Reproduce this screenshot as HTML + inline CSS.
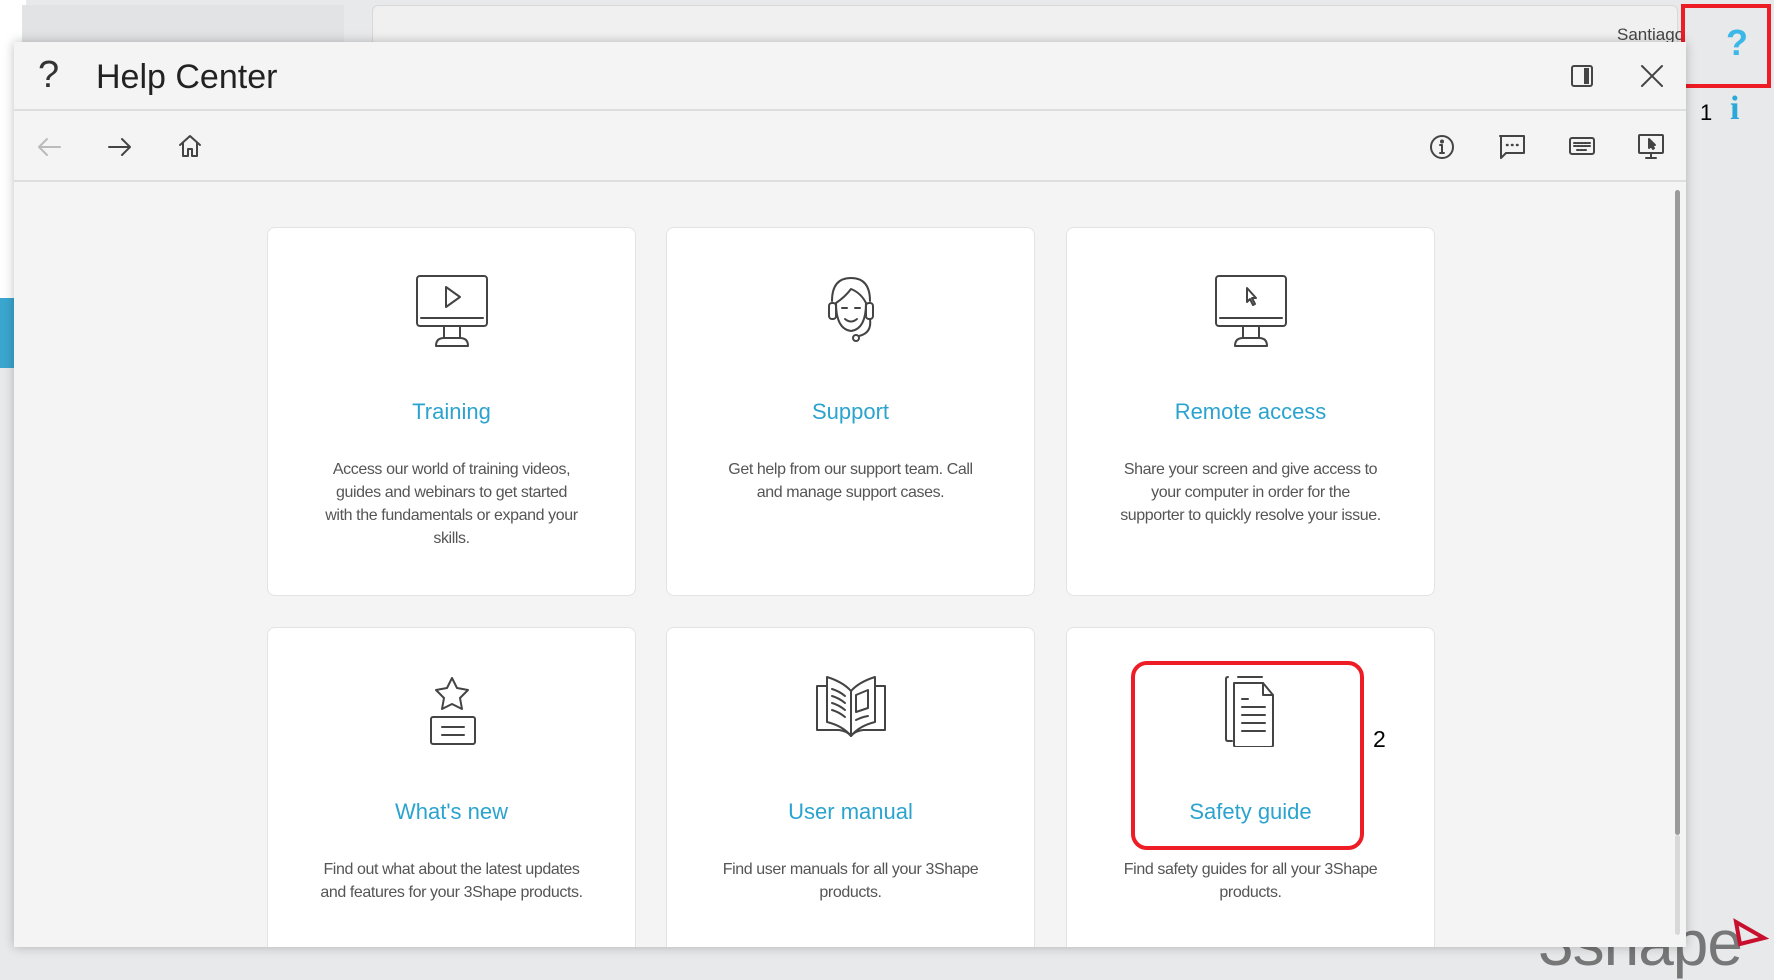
<!DOCTYPE html>
<html><head><meta charset="utf-8">
<style>
*{margin:0;padding:0;box-sizing:border-box}
body{width:1774px;height:965px;overflow:hidden;background:#e8e9eb;font-family:"Segoe UI","Liberation Sans",sans-serif;position:relative}
.abs{position:absolute}
.dlg{left:14px;top:42px;width:1672px;height:905px;background:#f4f4f4;box-shadow:0 0 10px rgba(0,0,0,.25);overflow:hidden}
.card{position:absolute;width:369px;background:#fff;border:1px solid #e3e3e3;border-radius:8px;text-align:center}
.card svg{position:absolute;left:148px;top:47px}
.card h3{position:absolute;left:0;right:0;top:169px;font-weight:normal;font-size:22px;color:#2ba3cf;line-height:30px}
.card p{position:absolute;left:0;right:0;top:230px;font-size:16px;line-height:23px;color:#555;letter-spacing:-.4px;white-space:nowrap}
svg.i{stroke:#444;fill:none;stroke-width:2;stroke-linecap:round;stroke-linejoin:round}
</style></head><body>
<div class="abs" style="left:0;top:0;width:26px;height:366px;background:#fff"></div>
<div class="abs" style="left:0;top:298px;width:26px;height:70px;background:#3aa6cf"></div>
<div class="abs" style="left:22px;top:5px;width:322px;height:40px;background:#e2e3e5"></div>
<div class="abs" style="left:372px;top:5px;width:1306px;height:40px;background:#f0f0f1;border:1px solid #d8d8d8;border-radius:6px 6px 0 0"></div>
<div class="abs" style="left:1617px;top:25px;font-size:17px;color:#444">Santiago</div>
<div class="abs" style="left:1681px;top:4px;width:90px;height:84px;border:4px solid #ee1c25"></div>
<div class="abs" style="left:1726px;top:22px;font-size:36px;font-weight:bold;color:#3bb8e8;font-family:'Liberation Sans',sans-serif">?</div>
<div class="abs" style="left:1700px;top:100px;font-size:22px;color:#000">1</div>
<div class="abs" style="left:1730px;top:90px;font-size:34px;font-weight:bold;color:#2aa8d8;font-family:'Liberation Serif',serif">i</div>
<div class="abs" style="left:1538px;top:906px;font-size:64px;color:#777;font-family:'Liberation Sans',sans-serif;letter-spacing:-1px">3shape</div>
<svg class="abs" style="left:1732px;top:918px" width="40" height="32"><path d="M4 4 L32 20 L8 26 Z" fill="none" stroke="#c8102e" stroke-width="4"/></svg>

<div class="abs dlg">
 <div class="abs" style="left:24px;top:12px;font-size:38px;color:#333;font-weight:300">?</div>
 <div class="abs" style="left:82px;top:16px;font-size:34px;color:#222;font-weight:300">Help Center</div>
 <svg class="abs i" style="left:1556px;top:22px" width="24" height="24" viewBox="0 0 24 24"><rect x="2" y="2" width="20" height="20" rx="2"/><rect x="14" y="4" width="5" height="16" fill="#444" stroke="none"/></svg>
 <svg class="abs i" style="left:1625px;top:21px" width="26" height="26" viewBox="0 0 26 26"><path d="M3 3L23 23M23 3L3 23"/></svg>
 <div class="abs" style="left:0;top:67px;width:1672px;height:2px;background:#dedede"></div>
 <svg class="abs i" style="left:22px;top:93px;stroke:#bbb" width="26" height="24" viewBox="0 0 26 24"><path d="M24 12H3M11 4L3 12L11 20"/></svg>
 <svg class="abs i" style="left:93px;top:93px" width="26" height="24" viewBox="0 0 26 24"><path d="M2 12H23M15 4L23 12L15 20"/></svg>
 <svg class="abs i" style="left:163px;top:91px" width="26" height="26" viewBox="0 0 26 26"><path d="M3 12L13 3L23 12M6 10V23H11V16H15V23H20V10"/></svg>
 <svg class="abs i" style="left:1415px;top:92px" width="26" height="26" viewBox="0 0 26 26"><circle cx="13" cy="13" r="11"/><path d="M13 11V19M11 19H15M11 11H13"/><circle cx="13" cy="7.5" r="1" fill="#444"/></svg>
 <svg class="abs i" style="left:1484px;top:92px" width="28" height="26" viewBox="0 0 28 26"><path d="M2 2H26V19H8L3 24V2Z"/><path d="M9 11h.5M14 11h.5M19 11h.5" stroke-width="2.5"/></svg>
 <svg class="abs i" style="left:1554px;top:93px" width="28" height="22" viewBox="0 0 28 22"><rect x="2" y="3" width="24" height="16" rx="2"/><path d="M6 8h16M6 11h16M9 15h10" stroke-dasharray="2 1.5"/></svg>
 <svg class="abs i" style="left:1623px;top:91px" width="28" height="28" viewBox="0 0 28 28"><rect x="2" y="2" width="24" height="18" rx="1"/><path d="M14 20V24M9 25H19"/><path d="M12 6L12 15L14 13L16 16L17 15L15 12L18 12Z" fill="#444"/></svg>
 <div class="abs" style="left:0;top:138px;width:1672px;height:2px;background:#dedede"></div>
 <div class="abs" style="left:1661px;top:148px;width:5px;height:645px;background:#9a9a9a;border-radius:3px"></div>
 <div class="abs" style="left:1661px;top:793px;width:5px;height:100px;background:#d8d8d8;border-radius:3px"></div>

 <div class="card" style="left:253px;top:185px;height:369px">
  <svg class="i" width="72" height="72" viewBox="0 0 72 72"><rect x="1" y="1" width="70" height="50" rx="3"/><path d="M5 43H67M30 12V32L44 22Z"/><path d="M28 51L28 63M44 51V63M20 71Q20 63 28 63H44Q52 63 52 71Z"/></svg>
  <h3>Training</h3>
  <p>Access our world of training videos,<br>guides and webinars to get started<br>with the fundamentals or expand your<br>skills.</p>
 </div>
 <div class="card" style="left:652px;top:185px;height:369px">
  <svg class="i" width="72" height="72" viewBox="0 0 72 72"><path d="M17 26Q17 3 36 3Q55 3 55 26"/><path d="M21 28Q21 54 36 56Q51 54 51 28Q46 18 36 14Q30 22 21 28Z"/><rect x="14" y="28" width="7" height="16" rx="3"/><rect x="51" y="28" width="7" height="16" rx="3"/><path d="M27 33h5M40 33h5M30 44Q36 49 42 44M55 44Q57 58 44 61"/><circle cx="41" cy="63" r="3"/></svg>
  <h3>Support</h3>
  <p>Get help from our support team. Call<br>and manage support cases.</p>
 </div>
 <div class="card" style="left:1052px;top:185px;height:369px">
  <svg class="i" width="72" height="72" viewBox="0 0 72 72"><rect x="1" y="1" width="70" height="50" rx="3"/><path d="M5 43H67"/><path d="M32 13V27L35 24L38 30L40 29L37 23H41Z"/><path d="M28 51L28 63M44 51V63M20 71Q20 63 28 63H44Q52 63 52 71Z"/></svg>
  <h3>Remote access</h3>
  <p>Share your screen and give access to<br>your computer in order for the<br>supporter to quickly resolve your issue.</p>
 </div>
 <div class="card" style="left:253px;top:585px;height:340px">
  <svg class="i" width="72" height="72" viewBox="0 0 72 72"><path d="M36 3L41 13L52 15L44 23L46 34L36 29L26 34L28 23L20 15L31 13Z"/><rect x="15" y="42" width="44" height="27" rx="2"/><path d="M26 52H48M26 60H48"/></svg>
  <h3>What's new</h3>
  <p>Find out what about the latest updates<br>and features for your 3Shape products.</p>
 </div>
 <div class="card" style="left:652px;top:585px;height:340px">
  <svg class="i" width="72" height="72" viewBox="0 0 72 72"><path d="M2 11H12M60 11H70V55H48Q40 56 36 61Q32 56 24 55H2V11"/><path d="M12 2Q28 7 36 16V61Q28 51 12 47Z"/><path d="M60 2Q44 7 36 16V61Q44 51 60 47Z"/><path d="M17 14Q24 16 30 21M17 21Q24 23 30 28M17 28Q24 30 30 35M17 35Q24 37 30 42M41 20L53 15V33L41 37ZM41 45Q47 42 53 41"/></svg>
  <h3>User manual</h3>
  <p>Find user manuals for all your 3Shape<br>products.</p>
 </div>
 <div class="card" style="left:1052px;top:585px;height:340px">
  <svg class="i" width="72" height="72" viewBox="0 0 72 72"><path d="M23 2H47M17 66H13Q11 66 11 64V4Q11 2 13 2"/><path d="M19 8H48L58 20V70Q58 72 56 72H21Q19 72 19 70Z"/><path d="M48 8V20H58M27 24H33M27 32H50M27 40H50M27 48H50M27 56H50"/></svg>
  <h3>Safety guide</h3>
  <p>Find safety guides for all your 3Shape<br>products.</p>
 </div>
 <div class="abs" style="left:1117px;top:619px;width:233px;height:189px;border:4px solid #ee1c25;border-radius:16px"></div>
 <div class="abs" style="left:1359px;top:684px;font-size:23px;color:#000;font-family:'Liberation Sans',sans-serif">2</div>
</div>
</body></html>
